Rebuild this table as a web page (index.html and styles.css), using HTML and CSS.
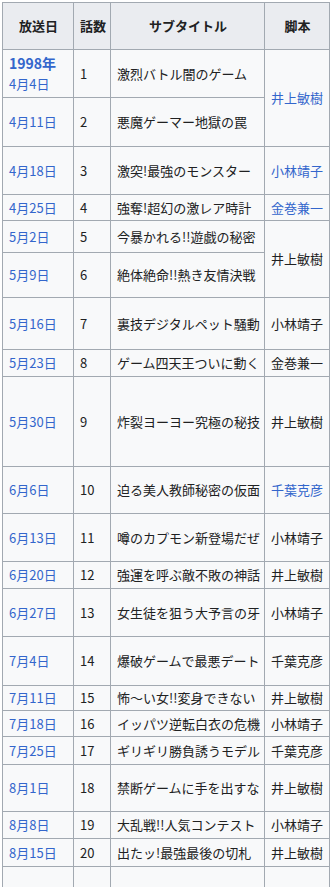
FILE: index.html
```html
<!DOCTYPE html>
<html lang="ja">
<head>
<meta charset="utf-8">
<title>放送リスト</title>
<link rel="stylesheet" href="styles.css">
</head>
<body>
<div class="frame">
<table class="wikitable">
<colgroup>
<col class="c-date"><col class="c-num"><col class="c-title"><col class="c-writer"><col class="c-more">
</colgroup>
<thead>
<tr class="h47"><th>放送日</th><th>話数</th><th>サブタイトル</th><th>脚本</th><th></th></tr>
</thead>
<tbody>
<tr class="h48"><td><a class="year">1998年</a><br><a>4月4日</a></td><td>1</td><td>激烈バトル闇のゲーム</td><td rowspan="2"><a>井上敏樹</a></td><td></td></tr>
<tr class="h49"><td><a>4月11日</a></td><td>2</td><td>悪魔ゲーマー地獄の罠</td><td></td></tr>
<tr class="h48"><td><a>4月18日</a></td><td>3</td><td>激突!最強のモンスター</td><td><a>小林靖子</a></td><td></td></tr>
<tr class="h26"><td><a>4月25日</a></td><td>4</td><td>強奪!超幻の激レア時計</td><td><a>金巻兼一</a></td><td></td></tr>
<tr class="h32"><td><a>5月2日</a></td><td>5</td><td>今暴かれる!!遊戯の秘密</td><td rowspan="2">井上敏樹</td><td></td></tr>
<tr class="h45"><td><a>5月9日</a></td><td>6</td><td>絶体絶命!!熱き友情決戦</td><td></td></tr>
<tr class="h52"><td><a>5月16日</a></td><td>7</td><td>裏技デジタルペット騒動</td><td>小林靖子</td><td></td></tr>
<tr class="h27"><td><a>5月23日</a></td><td>8</td><td>ゲーム四天王ついに動く</td><td>金巻兼一</td><td></td></tr>
<tr class="h90"><td><a>5月30日</a></td><td>9</td><td>炸裂ヨーヨー究極の秘技</td><td>井上敏樹</td><td></td></tr>
<tr class="h47"><td><a>6月6日</a></td><td>10</td><td>迫る美人教師秘密の仮面</td><td><a>千葉克彦</a></td><td></td></tr>
<tr class="h48"><td><a>6月13日</a></td><td>11</td><td>噂のカプモン新登場だぜ</td><td>小林靖子</td><td></td></tr>
<tr class="h27"><td><a>6月20日</a></td><td>12</td><td>強運を呼ぶ敵不敗の神話</td><td>井上敏樹</td><td></td></tr>
<tr class="h48"><td><a>6月27日</a></td><td>13</td><td>女生徒を狙う大予言の牙</td><td>小林靖子</td><td></td></tr>
<tr class="h49"><td><a>7月4日</a></td><td>14</td><td>爆破ゲームで最悪デート</td><td>千葉克彦</td><td></td></tr>
<tr class="h25"><td><a>7月11日</a></td><td>15</td><td>怖〜い女!!変身できない</td><td>井上敏樹</td><td></td></tr>
<tr class="h26"><td><a>7月18日</a></td><td>16</td><td>イッパツ逆転白衣の危機</td><td>小林靖子</td><td></td></tr>
<tr class="h28"><td><a>7月25日</a></td><td>17</td><td>ギリギリ勝負誘うモデル</td><td>千葉克彦</td><td></td></tr>
<tr class="h47"><td><a>8月1日</a></td><td>18</td><td>禁断ゲームに手を出すな</td><td>井上敏樹</td><td></td></tr>
<tr class="h27"><td><a>8月8日</a></td><td>19</td><td>大乱戦!!人気コンテスト</td><td>小林靖子</td><td></td></tr>
<tr class="h28"><td><a>8月15日</a></td><td>20</td><td>出たッ!最強最後の切札</td><td>井上敏樹</td><td></td></tr>
<tr class="h47"><td></td><td></td><td></td><td></td><td></td></tr>
</tbody>
</table>
</div>
</body>
</html>
```

FILE: styles.css
```css
html, body {
  margin: 0;
  padding: 0;
  background: #ffffff;
}

.frame {
  width: 330px;
  height: 887px;
  overflow: hidden;
  padding: 2px 0 0 2px;
  box-sizing: border-box;
}

.wikitable {
  border-collapse: collapse;
  table-layout: fixed;
  width: 427px;
  font-family: "Noto Sans CJK JP", "Noto Sans", sans-serif;
  font-size: 13px;
  line-height: 20px;
  color: #202122;
  background: #f8f9fa;
  border: 1px solid #a2a9b1;
}

.c-date { width: 71px; }
.c-num { width: 37px; }
.c-title { width: 154px; }
.c-writer { width: 65px; }
.c-more { width: 100px; }

.wikitable th,
.wikitable td {
  border: 1px solid #a2a9b1;
  padding: 2px 5px 2px 6px;
  vertical-align: middle;
  white-space: nowrap;
  overflow: hidden;
}

.wikitable th {
  background: #eaecf0;
  font-weight: bold;
  text-align: center;
}

.wikitable td {
  text-align: left;
}

.wikitable a {
  color: #3366cc;
  text-decoration: none;
}

.wikitable a.year {
  font-weight: bold;
  font-size: 14px;
}

.h25 { height: 25px; }
.h26 { height: 26px; }
.h27 { height: 27px; }
.h28 { height: 28px; }
.h32 { height: 32px; }
.h45 { height: 45px; }
.h47 { height: 47px; }
.h48 { height: 48px; }
.h49 { height: 49px; }
.h52 { height: 52px; }
.h90 { height: 90px; }
```
